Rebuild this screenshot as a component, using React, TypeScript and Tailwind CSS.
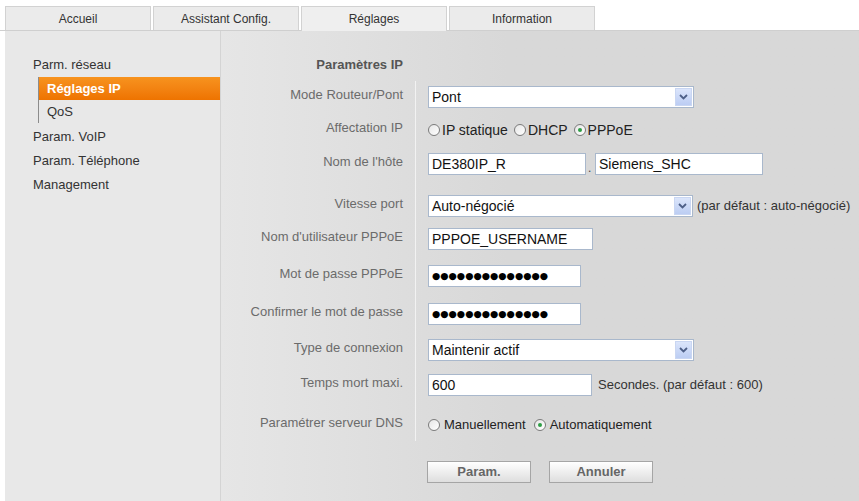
import React from 'react';

const font = { fontFamily: '"Liberation Sans", Arial, sans-serif' };

const Tab: React.FC<{ label: string; active?: boolean }> = ({ label, active }) => (
  <div
    className={`w-[146px] h-[24px] flex items-center justify-center text-[12px] text-[#333] border border-b-0 border-[#d2d2d2] ${
      active ? 'bg-[#efefef] h-[25px] -mb-px relative z-10' : 'bg-[#ebebeb]'
    }`}
  >
    {label}
  </div>
);

const SelectBox: React.FC<{ value: string; w: string }> = ({ value, w }) => (
  <div className={`${w} h-[22px] bg-white border border-[#a9b8cc] flex items-center justify-between pl-[3px] pr-px`}>
    <span className="text-[14px] text-[#111] leading-none">{value}</span>
    <span className="w-[17px] h-[18px] bg-gradient-to-b from-[#dbe5fb] to-[#bccdf3] border border-[#c9d6f2] flex items-center justify-center">
      <svg width="9" height="6" viewBox="0 0 9 6">
        <path d="M1 1 L4.5 4.5 L8 1" stroke="#4d5f87" strokeWidth="1.8" fill="none" />
      </svg>
    </span>
  </div>
);

const TextBox: React.FC<{ value: string; w: string; dots?: boolean }> = ({ value, w, dots }) => (
  <div className={`${w} h-[22px] bg-white border border-[#a9b8cc] flex items-center pl-[3px]`}>
    {dots ? (
      <span className="text-[9.5px] text-black leading-none" style={{ fontFamily: '"DejaVu Sans", sans-serif' }}>
        {value}
      </span>
    ) : (
      <span className="text-[14px] text-[#111] leading-none">{value}</span>
    )}
  </div>
);

const Radio: React.FC<{ label: string; checked?: boolean; wide?: boolean }> = ({ label, checked, wide }) => (
  <span className={`flex items-center ${wide ? 'gap-[4px] mr-[8px]' : 'gap-[2px] mr-[6px]'}`}>
    <span className="w-[12px] h-[12px] rounded-full border border-[#7b7b7b] bg-gradient-to-br from-[#e6e6e6] to-white flex items-center justify-center">
      {checked && <span className="w-[4px] h-[4px] rounded-full bg-[#2e9e45]" />}
    </span>
    <span className={`${wide ? 'text-[13px]' : 'text-[14px]'} text-[#222]`}>{label}</span>
  </span>
);

const Row: React.FC<{ label: string; h: string; children: React.ReactNode }> = ({ label, h, children }) => (
  <div className={`flex ${h}`}>
    <div className="w-[194px] pr-[12px] pt-[5px] text-right text-[13px] text-[#6b6b6b] leading-[18px]">{label}</div>
    <div className="flex-1 border-l border-[#f2f2f2] pl-[12px] pt-[5px]">
      <div className="flex items-center h-[22px]">{children}</div>
    </div>
  </div>
);

export default function App() {
  return (
    <div className="w-[859px] h-[501px] bg-white overflow-hidden" style={font}>
      <div className="pt-[6px] pl-[5px] flex gap-[2px] border-b border-[#cfcfcf]">
        <Tab label="Accueil" />
        <Tab label="Assistant Config." />
        <Tab label="Réglages" active />
        <Tab label="Information" />
      </div>
      <div className="flex h-[471px] pl-[5px]">
        <div className="w-[216px] bg-[#e8e8e8] border-r border-[#d4d4d4] pt-[22px]">
          <div className="pl-[28px] h-[24px] flex items-center text-[13px] text-[#333]">Parm. réseau</div>
          <div className="ml-[33px] border-l border-[#8c8c8c] h-[46px]">
            <div className="h-[23px] bg-gradient-to-b from-[#f7931e] to-[#ee7300] flex items-center pl-[8px] text-[13px] font-bold text-white">
              Réglages IP
            </div>
            <div className="h-[23px] flex items-center pl-[8px] text-[13px] text-[#333]">QoS</div>
          </div>
          <div className="pl-[28px] pt-[2px] text-[13px] text-[#333]">
            <div className="h-[24px] flex items-center">Param. VoIP</div>
            <div className="h-[24px] flex items-center">Param. Téléphone</div>
            <div className="h-[24px] flex items-center">Management</div>
          </div>
        </div>
        <div className="flex-1 bg-gradient-to-r from-[#e6e6e6] to-[#d8d8d8] to-[45%] pt-[26px]">
          <div className="w-[182px] text-right text-[13px] font-bold text-[#555] h-[24px] leading-[16px]">Paramètres IP</div>
          <Row label="Mode Routeur/Pont" h="h-[33px]">
            <SelectBox value="Pont" w="w-[266px]" />
          </Row>
          <Row label="Affectation IP" h="h-[34px]">
            <Radio label="IP statique" />
            <Radio label="DHCP" />
            <Radio label="PPPoE" checked />
          </Row>
          <Row label="Nom de l'hôte" h="h-[42px]">
            <TextBox value="DE380IP_R" w="w-[158px]" />
            <span className="w-[9px] text-[12px] text-[#444] self-end leading-[14px] pl-[2px]">.</span>
            <TextBox value="Siemens_SHC" w="w-[168px]" />
          </Row>
          <Row label="Vitesse port" h="h-[33px]">
            <SelectBox value="Auto-négocié" w="w-[265px]" />
            <span className="ml-[4px] text-[13px] text-[#333]">(par défaut : auto-négocié)</span>
          </Row>
          <Row label="Nom d'utilisateur PPPoE" h="h-[37px]">
            <TextBox value="PPPOE_USERNAME" w="w-[165px]" />
          </Row>
          <Row label="Mot de passe PPPoE" h="h-[38px]">
            <TextBox value="●●●●●●●●●●●●●●" w="w-[153px]" dots />
          </Row>
          <Row label="Confirmer le mot de passe" h="h-[36px]">
            <TextBox value="●●●●●●●●●●●●●●" w="w-[153px]" dots />
          </Row>
          <Row label="Type de connexion" h="h-[35px]">
            <SelectBox value="Maintenir actif" w="w-[266px]" />
          </Row>
          <Row label="Temps mort maxi." h="h-[40px]">
            <TextBox value="600" w="w-[164px]" />
            <span className="ml-[6px] text-[13px] text-[#333]">Secondes. (par défaut : 600)</span>
          </Row>
          <Row label="Paramétrer serveur DNS" h="h-[32px]">
            <Radio label="Manuellement" wide />
            <Radio label="Automatiquement" checked wide />
          </Row>
          <div className="flex gap-[18px] pl-[206px] pt-[20px]">
            <button className="w-[104px] h-[22px] border border-[#a5a5a5] bg-gradient-to-b from-white to-[#dedede] text-[13px] font-bold text-[#666]">
              Param.
            </button>
            <button className="w-[104px] h-[22px] border border-[#a5a5a5] bg-gradient-to-b from-white to-[#dedede] text-[13px] font-bold text-[#666]">
              Annuler
            </button>
          </div>
        </div>
      </div>
    </div>
  );
}
